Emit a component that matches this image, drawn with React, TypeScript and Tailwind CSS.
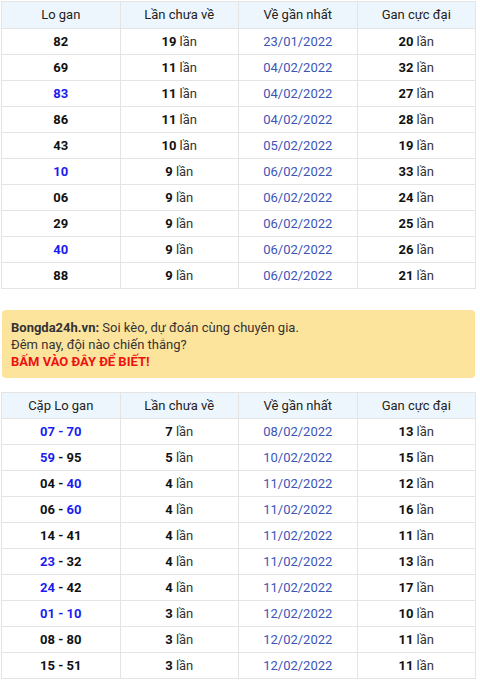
import React from "react";

type Row = { lo: React.ReactNode; chua: string; ve: string; gan: string };

const B = ({ children }: { children: React.ReactNode }) => (
  <span className="text-[#1c1cf2]">{children}</span>
);

const rows1: Row[] = [
  { lo: "82", chua: "19", ve: "23/01/2022", gan: "20" },
  { lo: "69", chua: "11", ve: "04/02/2022", gan: "32" },
  { lo: <B>83</B>, chua: "11", ve: "04/02/2022", gan: "27" },
  { lo: "86", chua: "11", ve: "04/02/2022", gan: "28" },
  { lo: "43", chua: "10", ve: "05/02/2022", gan: "19" },
  { lo: <B>10</B>, chua: "9", ve: "06/02/2022", gan: "33" },
  { lo: "06", chua: "9", ve: "06/02/2022", gan: "24" },
  { lo: "29", chua: "9", ve: "06/02/2022", gan: "25" },
  { lo: <B>40</B>, chua: "9", ve: "06/02/2022", gan: "26" },
  { lo: "88", chua: "9", ve: "06/02/2022", gan: "21" },
];

const rows2: Row[] = [
  { lo: <B>07 - 70</B>, chua: "7", ve: "08/02/2022", gan: "13" },
  { lo: <><B>59</B> - 95</>, chua: "5", ve: "10/02/2022", gan: "15" },
  { lo: <>04 - <B>40</B></>, chua: "4", ve: "11/02/2022", gan: "12" },
  { lo: <>06 - <B>60</B></>, chua: "4", ve: "11/02/2022", gan: "16" },
  { lo: "14 - 41", chua: "4", ve: "11/02/2022", gan: "11" },
  { lo: <><B>23</B> - 32</>, chua: "4", ve: "11/02/2022", gan: "13" },
  { lo: <><B>24</B> - 42</>, chua: "4", ve: "11/02/2022", gan: "17" },
  { lo: <B>01 - 10</B>, chua: "3", ve: "12/02/2022", gan: "10" },
  { lo: "08 - 80", chua: "3", ve: "12/02/2022", gan: "11" },
  { lo: "15 - 51", chua: "3", ve: "12/02/2022", gan: "11" },
];

function LoTable({ first, rows, headH }: { first: string; rows: Row[]; headH: string }) {
  const th = headH + " border border-[#e4e4e4] bg-[#eef6fd] font-normal text-[#222] text-center w-1/4";
  const td = "h-[26px] border border-[#e4e4e4] text-center";
  return (
    <table className="w-[475px] border-collapse table-fixed text-[13px]">
      <thead>
        <tr>
          <th className={th}>{first}</th>
          <th className={th}>Lần chưa về</th>
          <th className={th}>Về gần nhất</th>
          <th className={th}>Gan cực đại</th>
        </tr>
      </thead>
      <tbody>
        {rows.map((r, i) => (
          <tr key={i}>
            <td className={td + " font-bold text-[#111]"}>{r.lo}</td>
            <td className={td}>
              <b className="text-[#111]">{r.chua}</b>{" "}
              <span className="text-[#333]">lần</span>
            </td>
            <td className={td + " text-[#3b55b6]"}>{r.ve}</td>
            <td className={td}>
              <b className="text-[#111]">{r.gan}</b>{" "}
              <span className="text-[#333]">lần</span>
            </td>
          </tr>
        ))}
      </tbody>
    </table>
  );
}

export default function App() {
  return (
    <div className="w-[480px] h-[682px] overflow-hidden bg-white font-['Roboto',sans-serif] pt-px pl-px">
      <LoTable first="Lo gan" rows={rows1} headH="h-[27px]" />
      {/* banner */}
      <div className="ml-px mt-[21px] w-[473px] rounded-[4px] bg-[#fde49d] pl-[9px] pt-[9px] pb-[8px] text-[13px] leading-[17px] text-[#333]">
        <div>
          <b>Bongda24h.vn:</b> Soi kèo, dự đoán cùng chuyên gia.
        </div>
        <div>Đêm nay, đội nào chiến thắng?</div>
        <div className="font-bold text-[#ee1111]">BẤM VÀO ĐÂY ĐỂ BIẾT!</div>
      </div>
      <div className="mt-[14px]">
        <LoTable first="Cặp Lo gan" rows={rows2} headH="h-[26px]" />
      </div>
    </div>
  );
}
